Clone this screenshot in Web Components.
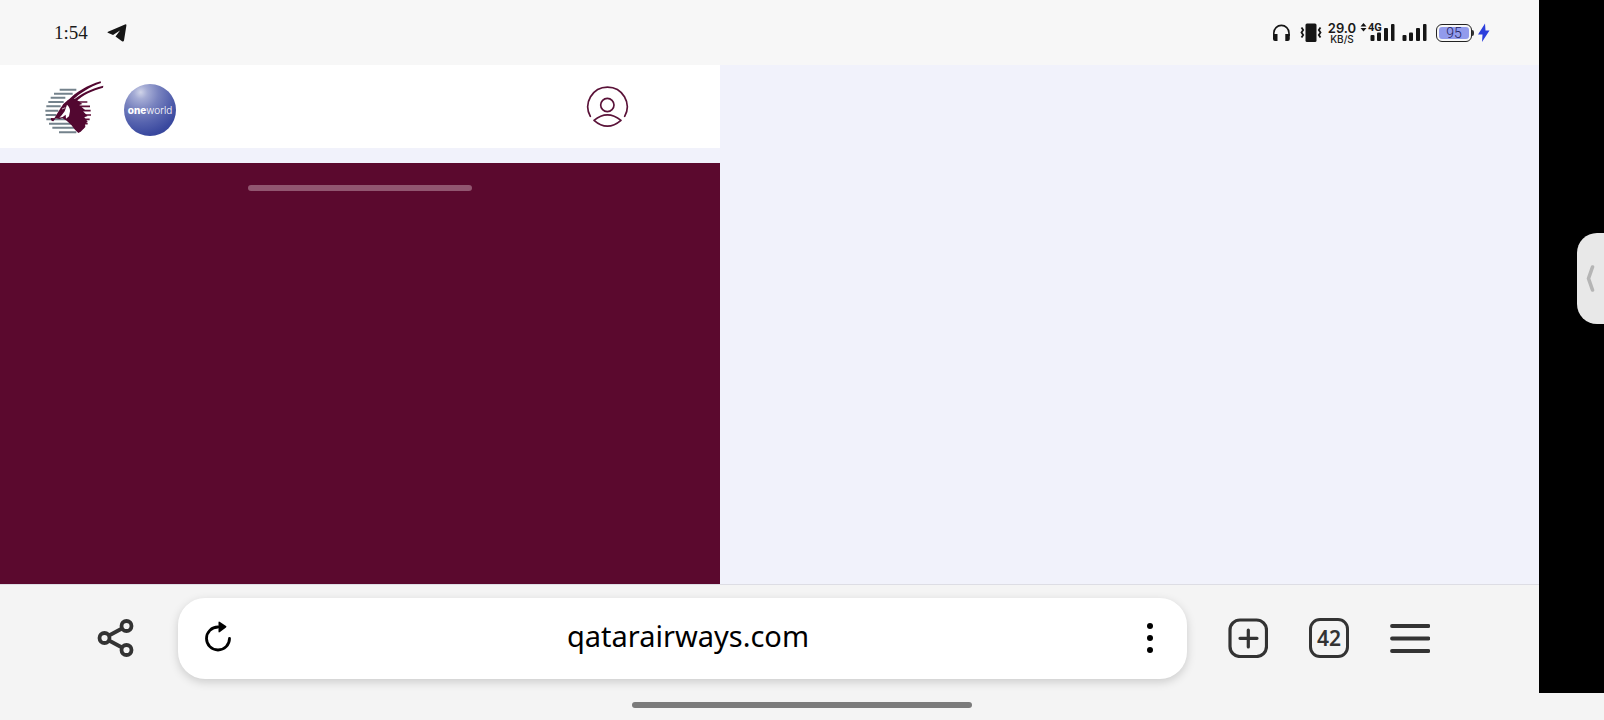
<!DOCTYPE html>
<html lang="en">
<head>
<meta charset="utf-8">
<meta name="viewport" content="width=device-width, initial-scale=1">
<title>qatarairways.com</title>
<style>
  html, body { margin: 0; background: #f4f4f4; }
  body { font-family: "Noto Sans", "Open Sans", sans-serif; color: #1a1a1a; }
</style>
</head>
<body>
<phone-screen>
  <status-bar slot="status" time="1:54" speed="29.0" battery="95"></status-bar>
  <airline-page slot="page"></airline-page>
  <browser-toolbar slot="toolbar" address="qatarairways.com" tabs="42"></browser-toolbar>
</phone-screen>
<script>
const define = (name, render) => customElements.define(name, class extends HTMLElement {
  constructor() { super(); this.attachShadow({ mode: "open" }); }
  connectedCallback() { this.shadowRoot.innerHTML = render(this); }
});

/* Whole device: app column, camera cut-out rail, gesture strip */
define("phone-screen", () => `
<style>
  :host { display: flex; flex-direction: column; min-height: 100vh; }
  .top { flex: 1; display: flex; }
  .app { flex: 1; min-width: 0; display: flex; flex-direction: column; }
  slot[name=page]::slotted(*) { flex: 1; }
  .gesture { height: 27px; display: flex; align-items: center; justify-content: center; }
  .gesture i { width: 340px; height: 6px; border-radius: 3px; background: #7b7b7b; margin-bottom: 3px; }
</style>
<div class="top">
  <div class="app"><slot name="status"></slot><slot name="page"></slot><slot name="toolbar"></slot></div>
  <side-rail></side-rail>
</div>
<div class="gesture"><i></i></div>`);

define("side-rail", () => `
<style>
  :host { display: flex; justify-content: flex-end; align-items: flex-start; width: 65px; background: #000; padding-top: 233px; box-sizing: border-box; }
  button { width: 27px; height: 91px; border: 0; padding: 0; border-radius: 20px 0 0 20px; background: #e8e8e8; display: flex; align-items: center; justify-content: center; }
</style>
<button aria-label="Open side panel"><svg width="10" height="28" viewBox="0 0 10 28" fill="none" stroke="#b5b5b5" stroke-width="3.600" stroke-linecap="round" stroke-linejoin="round"><path d="M6.500 2 2.500 13.500l4 11.500"/></svg></button>`);

define("status-bar", el => `
<style>
  :host { display: flex; align-items: center; height: 65px; box-sizing: border-box; padding: 1px 49px 0 54px; background: #f7f7f7; color: #1a1a1a; }
  svg { display: block; }
  .time { font: 19px/20px "Liberation Serif", serif; width: 53px; }
  .icons { margin-left: auto; display: flex; align-items: center; gap: 4px; }
  .speed { width: 32px; margin-right: -2px; font: 600 13px/12px Inter, sans-serif; white-space: nowrap; display: flex; flex-direction: column; align-items: center; }
  .speed small { font: 500 10px/10px Inter, sans-serif; }
  .signal { position: relative; }
  .signal span { position: absolute; left: 8px; top: 0; font: 700 11px/10px Roboto, sans-serif; }
  .battery { box-sizing: border-box; width: 36px; height: 18px; border: 1px solid #222; border-radius: 6px; padding: 2px; }
  .battery b { display: block; border-radius: 3px; background: #929bec; font: 300 14px/12px Roboto, sans-serif; color: #23245e; text-align: center; }
  .cell { display: flex; align-items: center; }
  .cell i { width: 2px; height: 6px; background: #333; border-radius: 0 2px 2px 0; }
</style>
<span class="time">${el.getAttribute("time")}</span>
<svg width="20" height="20" viewBox="0 0 20 20" fill="#151515"><path d="M.8 9.8Q0 9.2 1 8.700L18 1.400q1.600-.5 1.400 1L17 17.600q-.5 1.600-2 .7L8.500 13.400 13 7.400 6 12z"/></svg>
<div class="icons">
  <svg width="24" height="20" viewBox="0 0 24 20" fill="none" stroke="#151515" stroke-width="1.600"><path d="M1.800 13V10a7.200 7.200 0 0 1 15.200 0v3"/><path d="M1 11h4.500v7H3q-2 0-2-2zM17.800 11h-4.500v7h2.500q2 0 2-2z" fill="#151515" stroke="none"/></svg>
  <svg width="22" height="20" viewBox="0 0 22 20" fill="none" stroke="#151515" stroke-width="1.800"><rect x="5.500" y=".5" width="11" height="18.500" rx="1.500" fill="#151515" stroke="none"/><path d="M1.500 4.500 3.200 7 1.500 9.500 3.200 12 1.500 14.500M20.500 4.500 18.800 7 20.500 9.500 18.800 12 20.500 14.500"/></svg>
  <span class="speed">${el.getAttribute("speed")}<small>KB/S</small></span>
  <div class="signal">
    <svg width="38" height="20" viewBox="0 0 38 20" fill="#151515"><path d="M3.500 0 6.500 3.500h-6zM3.500 8.500.5 5h6z"/><rect x="10.500" y="12" width="4" height="6" rx="1"/><rect x="17" y="9.500" width="4" height="8.500" rx="1"/><rect x="24" y="5" width="4" height="13" rx="1"/><rect x="31" y="1" width="3.500" height="17" rx="1"/></svg>
    <span>4G</span>
  </div>
  <svg width="30" height="20" viewBox="0 0 30 20" fill="#151515"><rect x=".5" y="12" width="4" height="6" rx="1"/><rect x="7" y="9.500" width="4" height="8.500" rx="1"/><rect x="14" y="5" width="4" height="13" rx="1"/><rect x="21" y="1" width="3.500" height="17" rx="1"/></svg>
  <div class="cell"><div class="battery"><b>${el.getAttribute("battery")}</b></div><i></i></div>
  <svg width="12" height="20" viewBox="0 0 12 20" fill="#2c3fdc"><path d="M7 .5 0 11.500h4.500L4 19 11.500 7.500H7.500z"/></svg>
</div>`);

define("airline-page", () => `
<style>
  :host { display: flex; background: #f1f2fb; }
  .view { flex: 0 0 46.800%; min-width: 0; display: flex; flex-direction: column; gap: 15px; }
  .hero { flex: 1; background: #5b092e; display: flex; justify-content: center; align-items: flex-start; padding-top: 22px; }
  .hero i { width: 31%; height: 6px; border-radius: 3px; background: #915670; }
</style>
<div class="view">
  <airline-header></airline-header>
  <div class="hero"><i></i></div>
</div>`);

define("airline-header", () => `
<style>
  :host { display: flex; align-items: center; height: 83px; box-sizing: border-box; padding: 1px 91px 0 45px; background: #fff; }
  a { color: inherit; text-decoration: none; display: block; }
  svg { display: block; }
  .badge { margin: 5px 0 0 19px; width: 52px; height: 52px; border-radius: 50%; display: flex; align-items: center; justify-content: center;
    background: radial-gradient(circle at 32% 16%, #d0d4e9 0, #a5acd5 12%, #7983bf 32%, #5562ae 55%, #3a499f 76%, #324097 100%);
    font: 10px/12px Inter, sans-serif; color: #fff; }
  .badge b { font-weight: 800; }
  .badge span { font-weight: 300; }
  button { margin-left: auto; padding: 0; border: 0; background: none; }
</style>
<a href="#" aria-label="Qatar Airways home">
  <svg width="60" height="58" viewBox="46 24 180 174">
    <g stroke="#74828c" stroke-width="6">
      <path d="M90 59h50M73 71h56M63 83h44M56 96h46M50 109h43M47 122h39M48 135h32M50 148h80M58 161h84M68 173h80M88 187h52"/>
    </g>
    <g stroke="#5f1138" stroke-width="5"><path d="M145 96h28M150 109h31M155 122h28M155 135h29M155 148h25M150 161h24M140 173h22"/></g>
    <g fill="#520730">
      <path d="M113 93C139 66 173 46 213 34l1 5C180 51 151 69 128 91z"/>
      <path d="M128 93C151 72 182 57 221 47l-1 6C187 62 160 75 139 94z"/>
      <path d="M74 145 91 117q10-18 24-27l12-5 12 3 19 14-9 3 18 16-7 3 14 14-10 4 10 13-8 6 1 10-14 14-7 4-10-10-11-14-14-13-13-8-8 3-12-2-7 9q-9-1-7-10z"/>
    </g>
    <path d="M112 104q10 9 9 20l-3 15-9 7-1-12-9 7-10 2 7-7 9-12z" fill="#fff"/>
    <path d="M97 117l10-4" stroke="#fff" stroke-width="2"/>
  </svg>
</a>
<a class="badge" href="#" aria-label="oneworld"><b>one</b><span>world</span></a>
<button aria-label="Profile">
  <svg width="43" height="45" viewBox="48 30 129 135" fill="none" stroke="#5a1238" stroke-width="5" stroke-linecap="round">
    <path d="M61 124a59 59 0 1 1 103 0"/><circle cx="112" cy="90" r="20"/><path d="M72 136q40-33 81 0-41 35-81 0z" stroke-linejoin="round"/>
  </svg>
</button>`);

define("browser-toolbar", el => `
<style>
  :host { display: flex; align-items: center; gap: 41px; box-sizing: border-box; padding: 13px 109px 14px 97px; background: #f4f4f4; border-top: 1px solid #dddde4; }
  button { border: 0; padding: 0; margin: 0 0 1px; background: none; color: #333; width: 40px; height: 40px; flex: none; display: flex; align-items: center; justify-content: center; }
  svg { display: block; flex: none; }
  .pill { flex: 1; min-width: 0; height: 81px; box-sizing: border-box; padding: 0 17px 0 20px; display: flex; align-items: center; background: #fff; border-radius: 27px; box-shadow: 0 3px 10px rgba(0,0,0,.17); }
  input { flex: 1; min-width: 0; border: 0; padding: 0 0 5px 8px; background: none; outline: 0; text-align: center; font: 29px/40px "Noto Sans", sans-serif; color: #000; }
  .tabs { box-sizing: border-box; border: 3px solid #333; border-radius: 11px; font: 600 21px/32px "Noto Sans", sans-serif; }
</style>
<button aria-label="Share"><svg width="40" height="40" viewBox="0 0 40 40" fill="none" stroke="#333" stroke-width="3.800"><circle cx="7.500" cy="20" r="5"/><circle cx="29.500" cy="8" r="5"/><circle cx="29.500" cy="32" r="5"/><path d="M12 17.500 25 10.500M12 22.500 25 29.500"/></svg></button>
<div class="pill">
  <button aria-label="Reload"><svg width="40" height="40" viewBox="0 0 40 40"><path d="M31.500 20.500A11.500 11.500 0 1 1 20 9" fill="none" stroke="#000" stroke-width="2.800" stroke-linecap="round"/><path d="M20.500 4.500Q20.500 3 22 4L28 8q1 .8 0 1.500l-6 4.500q-1.500 1-1.500-.5z"/></svg></button>
  <input aria-label="Address" value="${el.getAttribute("address")}">
  <button aria-label="Page options"><svg width="40" height="40" viewBox="0 0 40 40" fill="#000"><circle cx="20" cy="8" r="3"/><circle cx="20" cy="20" r="3"/><circle cx="20" cy="32" r="3"/></svg></button>
</div>
<button aria-label="New tab"><svg width="40" height="40" viewBox="0 0 40 40" fill="none" stroke="#333" stroke-width="3.200" stroke-linecap="round"><rect x="2" y="2" width="36.500" height="36.500" rx="10"/><path d="M20.300 12v17M12 20.300h17"/></svg></button>
<button class="tabs" aria-label="Open tabs">${el.getAttribute("tabs")}</button>
<button aria-label="Menu"><svg width="40" height="40" viewBox="0 0 40 40" stroke="#333" stroke-width="3.800" stroke-linecap="round"><path d="M2 8h36.500M2 20.500h36.500M2 33h36.500"/></svg></button>`);
</script>
</body>
</html>
